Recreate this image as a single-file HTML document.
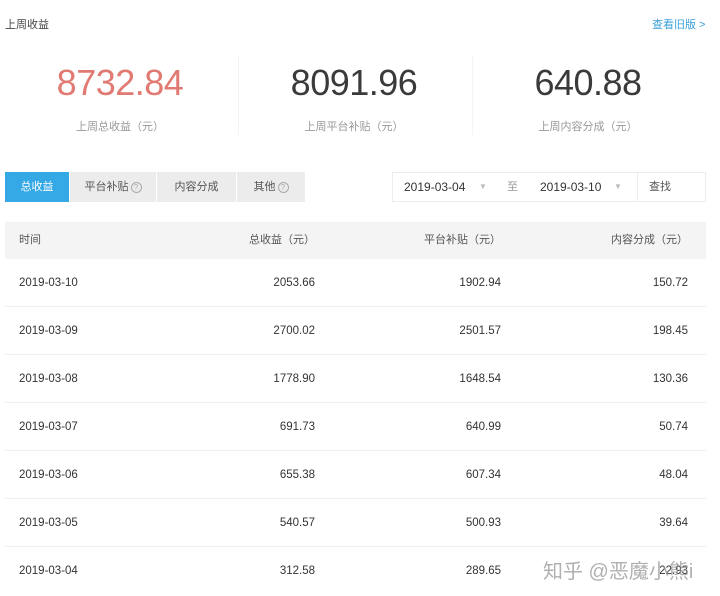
<!DOCTYPE html>
<html><head><meta charset="utf-8"><style>
*{margin:0;padding:0;box-sizing:border-box}
body{width:720px;height:596px;background:#fff;font-family:"Liberation Sans","Noto Sans CJK SC",sans-serif;color:#333;position:relative;overflow:hidden}
.a{position:absolute}
.t{font-size:11px;color:#444}
.big{position:absolute;top:62px;width:234px;text-align:center;font-size:36px;color:#3a3a3a;letter-spacing:-0.5px}
.lab{position:absolute;top:118px;width:234px;text-align:center;font-size:11px;color:#999}
.tab{position:absolute;top:172px;height:30px;line-height:30px;text-align:center;font-size:11px;color:#555;background:#ececec}
.q{display:inline-block;width:11px;height:11px;border:1px solid #aaa;border-radius:50%;font-size:8px;line-height:9px;color:#aaa;vertical-align:middle;margin-left:2px}
.row{position:absolute;left:5px;width:701px;height:48px;border-bottom:1px solid #f0f0f0;font-size:11.5px;color:#333}
.row span{position:absolute;top:0;line-height:48px}
</style></head><body>
<div class="a t" style="left:5px;top:16px">上周收益</div>
<div class="a" style="left:652px;top:16px;font-size:11px;color:#3aa0d8">查看旧版 &gt;</div>
<div class="big" style="left:3px;color:#e07a72">8732.84</div>
<div class="big" style="left:237px">8091.96</div>
<div class="big" style="left:471px">640.88</div>
<div class="lab" style="left:3px">上周总收益（元）</div>
<div class="lab" style="left:237px">上周平台补贴（元）</div>
<div class="lab" style="left:471px">上周内容分成（元）</div>
<div class="a" style="left:238px;top:55px;width:1px;height:80px;background:#f4f4f4"></div>
<div class="a" style="left:472px;top:55px;width:1px;height:80px;background:#f4f4f4"></div>
<div class="tab" style="left:5px;width:64px;background:#35a8e6;color:#fff">总收益</div>
<div class="tab" style="left:70px;width:86px">平台补贴<span class="q">?</span></div>
<div class="tab" style="left:157px;width:79px">内容分成</div>
<div class="tab" style="left:237px;width:68px">其他<span class="q">?</span></div>
<div class="a" style="left:392px;top:172px;width:314px;height:30px;border:1px solid #ececec;font-size:12px;line-height:28px">
<span class="a" style="left:11px">2019-03-04</span><span class="a" style="left:86px;color:#bbb;font-size:8px">▼</span>
<span class="a" style="left:114px;color:#999;font-size:11px">至</span>
<span class="a" style="left:147px">2019-03-10</span><span class="a" style="left:221px;color:#bbb;font-size:8px">▼</span>
<span class="a" style="left:244px;top:-1px;width:1px;height:30px;background:#ececec"></span>
<span class="a" style="left:256px;font-size:11px;color:#555">查找</span></div>
<div class="a" style="left:5px;top:222px;width:701px;height:37px;background:#f4f4f4;font-size:11px;color:#555;line-height:37px">
<span class="a" style="left:14px">时间</span><span class="a" style="right:391px">总收益（元）</span><span class="a" style="right:205px">平台补贴（元）</span><span class="a" style="right:18px">内容分成（元）</span></div>
<div class="row" style="top:259px"><span style="left:14px">2019-03-10</span><span style="right:391px">2053.66</span><span style="right:205px">1902.94</span><span style="right:18px">150.72</span></div>
<div class="row" style="top:307px"><span style="left:14px">2019-03-09</span><span style="right:391px">2700.02</span><span style="right:205px">2501.57</span><span style="right:18px">198.45</span></div>
<div class="row" style="top:355px"><span style="left:14px">2019-03-08</span><span style="right:391px">1778.90</span><span style="right:205px">1648.54</span><span style="right:18px">130.36</span></div>
<div class="row" style="top:403px"><span style="left:14px">2019-03-07</span><span style="right:391px">691.73</span><span style="right:205px">640.99</span><span style="right:18px">50.74</span></div>
<div class="row" style="top:451px"><span style="left:14px">2019-03-06</span><span style="right:391px">655.38</span><span style="right:205px">607.34</span><span style="right:18px">48.04</span></div>
<div class="row" style="top:499px"><span style="left:14px">2019-03-05</span><span style="right:391px">540.57</span><span style="right:205px">500.93</span><span style="right:18px">39.64</span></div>
<div class="row" style="top:547px;border-bottom:none"><span style="left:14px">2019-03-04</span><span style="right:391px">312.58</span><span style="right:205px">289.65</span><span style="right:18px">22.93</span></div>
<div class="a" style="left:543px;top:555px;font-size:20px;color:rgba(150,150,150,0.75)">知乎 @恶魔小熊i</div>
</body></html>
